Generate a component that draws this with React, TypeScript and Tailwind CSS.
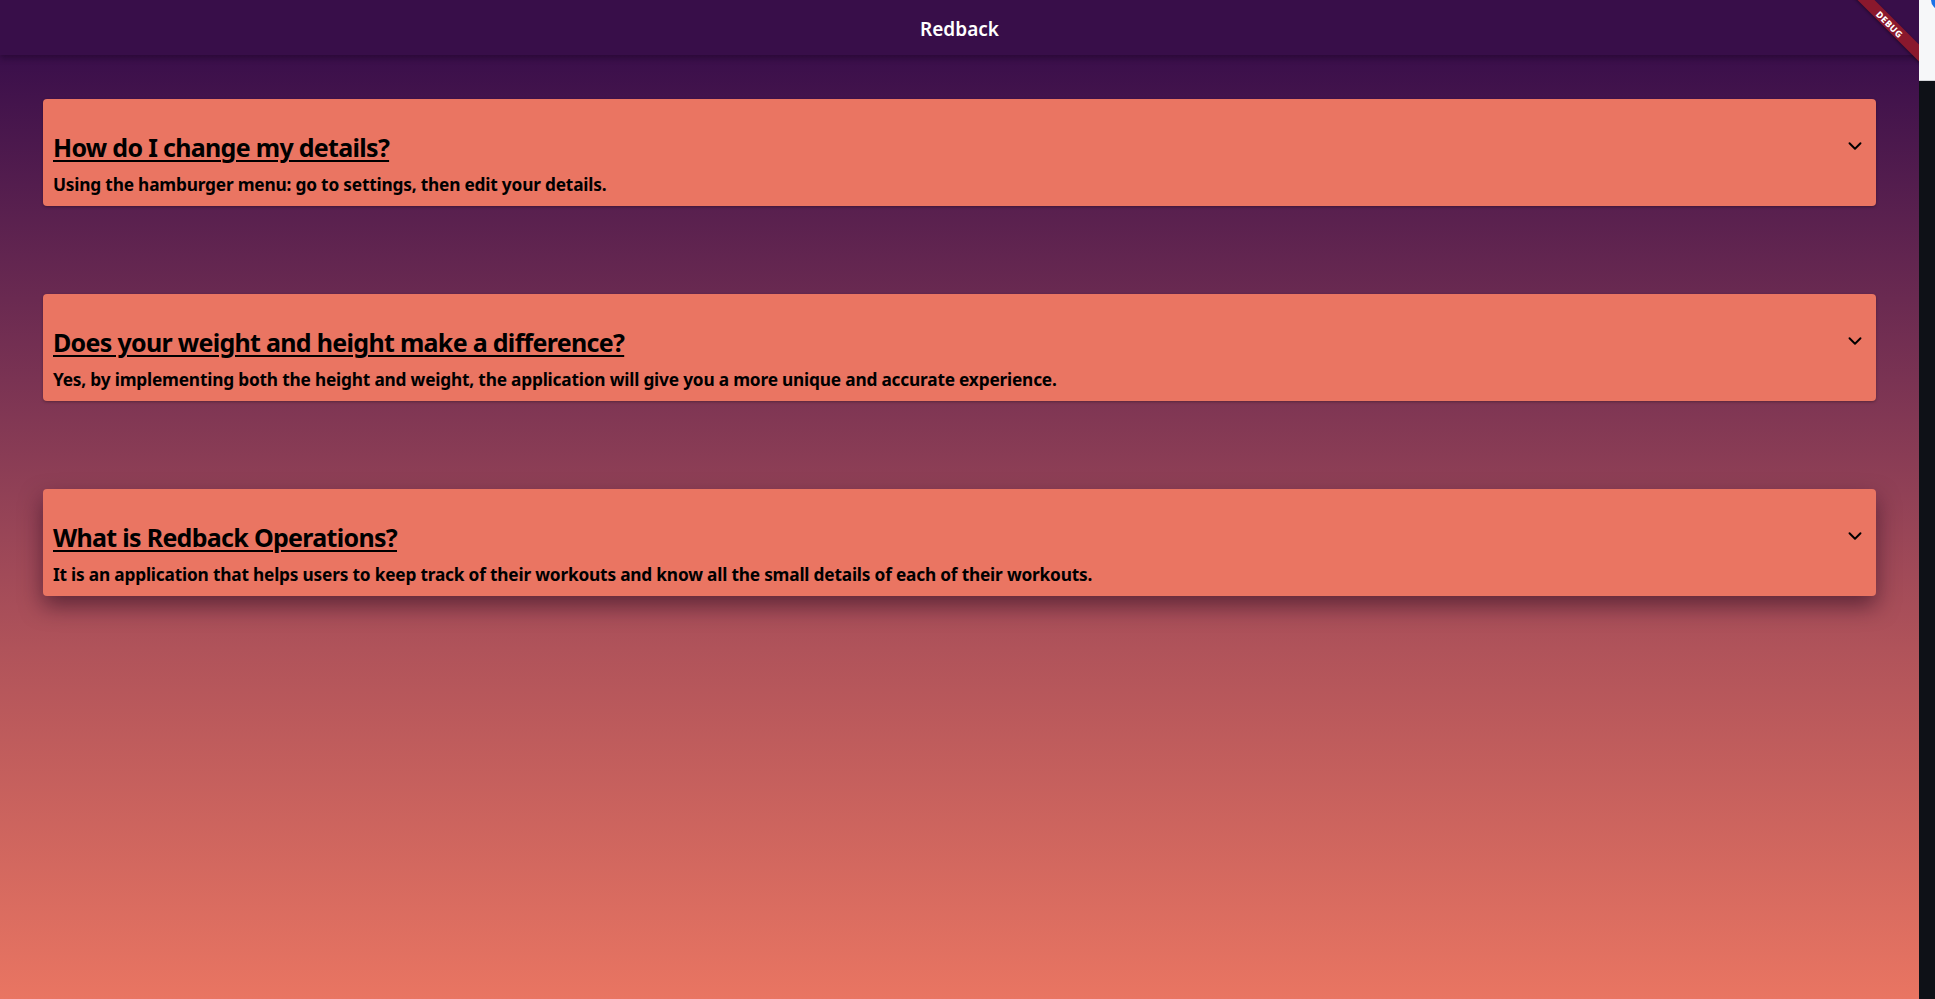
import React from "react";
import { ChevronDown } from "lucide-react";

const faqs = [
  {
    question: "How do I change my details?",
    answer: "Using the hamburger menu: go to settings, then edit your details.",
  },
  {
    question: "Does your weight and height make a difference?",
    answer:
      "Yes, by implementing both the height and weight, the application will give you a more unique and accurate experience.",
  },
  {
    question: "What is Redback Operations?",
    answer:
      "It is an application that helps users to keep track of their workouts and know all the small details of each of their workouts.",
  },
];

const FaqCard = ({
  question,
  answer,
  raised,
}: {
  question: string;
  answer: string;
  raised?: boolean;
}) => {
  return (
    <div
      className={
        "h-[107px] rounded-[4px] bg-[#ea7562] flex items-start pl-[10px] pr-[10px] " +
        (raised
          ? "shadow-[0_10px_22px_rgba(40,10,30,0.55)]"
          : "shadow-[0_1px_3px_rgba(0,0,0,0.3)]")
      }
    >
      <div className="flex-1 flex flex-col pt-[33px]">
        <h2 className="text-[25px] leading-[30px] font-bold text-black underline decoration-2 underline-offset-[3px] tracking-[-0.7px]">
          {question}
        </h2>
        <p className="mt-[12px] text-[17.3px] leading-[22px] font-bold text-black tracking-[-0.2px]">
          {answer}
        </p>
      </div>
      <ChevronDown className="mt-[36px] w-[22px] h-[22px] text-black" strokeWidth={2.1} />
    </div>
  );
};

const App = () => {
  return (
    <div
      className="flex w-full h-[999px] overflow-hidden"
      style={{ fontFamily: '"Noto Sans", "Open Sans", sans-serif' }}
    >
      <div className="relative flex-1 flex flex-col overflow-hidden bg-[linear-gradient(180deg,#3a0e4a_0%,#3b0f4b_6%,#7a3353_38%,#b0535a_65%,#e97562_100%)]">
        <header className="h-[55px] bg-[#380e49] flex items-center justify-center pt-[4px] shadow-[0_3px_6px_rgba(20,0,30,0.45)] z-10">
          <span className="text-white text-[19px] font-semibold">Redback</span>
        </header>

        <main className="flex flex-col gap-[88px] px-[43px] pt-[44px]">
          {faqs.map((f, i) => (
            <FaqCard key={i} question={f.question} answer={f.answer} raised={i === 2} />
          ))}
        </main>

        {/* debug banner */}
        <div className="absolute top-[18px] right-[-36px] w-[130px] h-[12px] rotate-45 bg-[#8a182d] flex items-center justify-center z-20 shadow-[0_1px_3px_rgba(0,0,0,0.4)]">
          <span className="text-white text-[9px] font-extrabold tracking-[0.5px] leading-none">
            DEBUG
          </span>
        </div>
      </div>

      <div className="w-[16px] flex flex-col">
        <div className="relative h-[81px] bg-[#f6f7f9] border-b border-[#d4d6da] overflow-hidden">
          <div className="absolute -top-[10px] left-[12px] w-[20px] h-[20px] rounded-full bg-[#1a73e8]" />
        </div>
        <div className="flex-1 bg-[#0e1117]" />
      </div>
    </div>
  );
};

export default App;
